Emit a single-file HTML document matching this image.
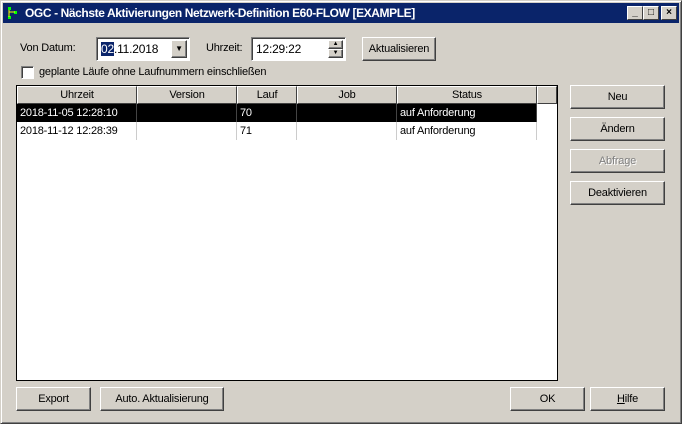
<!DOCTYPE html>
<html><head><meta charset="utf-8"><style>
*{box-sizing:border-box;margin:0;padding:0}
body{width:682px;height:424px;background:#D4D0C8;font-family:"Liberation Sans",sans-serif;font-size:11px;color:#000;position:relative;overflow:hidden;letter-spacing:-0.2px}
.win{position:absolute;left:0;top:0;width:682px;height:424px;border:1px solid;border-color:#D4D0C8 #404040 #404040 #D4D0C8;box-shadow:inset 1px 1px #fff,inset -1px -1px #808080}
.title{position:absolute;left:3px;top:3px;width:676px;height:20px;background:#0A246A;color:#fff;font-weight:bold;font-size:12px;line-height:20px;padding-left:22px;letter-spacing:-0.4px}
.a{position:absolute}
.btn{position:absolute;background:#D4D0C8;border:1px solid;border-color:#fff #404040 #404040 #fff;box-shadow:inset -1px -1px #808080;text-align:center;font-size:11px}
.sunk{position:absolute;background:#fff;border:1px solid;border-color:#808080 #fff #fff #808080;box-shadow:inset 1px 1px #404040}
.tb{position:absolute;top:3px;width:16px;height:14px;background:#D4D0C8;border:1px solid;border-color:#fff #404040 #404040 #fff;color:#000;font-size:10px;line-height:12px;text-align:center;font-weight:bold;letter-spacing:0}
.hd{position:absolute;top:86px;height:18px;background:#D4D0C8;border:1px solid;border-color:#fff #404040 #404040 #fff;text-align:center;line-height:16px}
.cell{position:absolute;height:18px;line-height:18px;padding-left:3px;border-right:1px solid #ccc}
</style></head><body>
<div class="win"></div>
<div class="title">OGC - Nächste Aktivierungen Netzwerk-Definition E60-FLOW [EXAMPLE]
<svg class="a" style="left:4px;top:3px" width="12" height="14"><rect x="1" y="1" width="3" height="3" fill="#0f0"/><rect x="7" y="5" width="3" height="3" fill="#0f0"/><rect x="1" y="10" width="3" height="3" fill="#0f0"/><path d="M2 4v7M2 6h6" stroke="#ff0" fill="none"/></svg>
<div class="tb" style="left:624px">_</div><div class="tb" style="left:640px">□</div><div class="tb" style="left:658px">×</div>
</div>
<div class="a" style="left:20px;top:42px">Von Datum:</div>
<div class="sunk" style="left:96px;top:37px;width:94px;height:24px"><span class="a" style="left:4px;top:4px;font-size:12px"><span style="background:#0A246A;color:#fff">02</span>.11.2018</span>
<div class="btn" style="left:74px;top:2px;width:16px;height:18px;font-size:8px;line-height:16px">▼</div></div>
<div class="a" style="left:206px;top:42px">Uhrzeit:</div>
<div class="sunk" style="left:251px;top:37px;width:95px;height:24px"><span class="a" style="left:4px;top:4px;font-size:12px">12:29:22</span>
<div class="btn" style="left:76px;top:2px;width:15px;height:9px;font-size:6px;line-height:7px">▲</div>
<div class="btn" style="left:76px;top:11px;width:15px;height:9px;font-size:6px;line-height:7px">▼</div></div>
<div class="btn" style="left:362px;top:37px;width:74px;height:24px;line-height:22px">Aktualisieren</div>
<div class="sunk" style="left:21px;top:66px;width:13px;height:13px"></div>
<div class="a" style="left:39px;top:66px">geplante Läufe ohne Laufnummern einschließen</div>
<div class="a" style="left:16px;top:85px;width:542px;height:296px;background:#fff;border:1px solid #000"></div>
<div class="hd" style="left:17px;width:120px">Uhrzeit</div>
<div class="hd" style="left:137px;width:100px">Version</div>
<div class="hd" style="left:237px;width:60px">Lauf</div>
<div class="hd" style="left:297px;width:100px">Job</div>
<div class="hd" style="left:397px;width:140px">Status</div>
<div class="hd" style="left:537px;width:20px"></div>
<div class="a" style="left:17px;top:104px;width:520px;height:18px;background:#000"></div>
<div class="cell" style="left:17px;top:104px;width:120px;color:#fff;border-color:#444">2018-11-05 12:28:10</div>
<div class="cell" style="left:137px;top:104px;width:100px;border-color:#444"></div>
<div class="cell" style="left:237px;top:104px;width:60px;color:#fff;border-color:#444">70</div>
<div class="cell" style="left:297px;top:104px;width:100px;border-color:#444"></div>
<div class="cell" style="left:397px;top:104px;width:140px;color:#fff;border-color:#444">auf Anforderung</div>
<div class="cell" style="left:17px;top:122px;width:120px">2018-11-12 12:28:39</div>
<div class="cell" style="left:137px;top:122px;width:100px"></div>
<div class="cell" style="left:237px;top:122px;width:60px">71</div>
<div class="cell" style="left:297px;top:122px;width:100px"></div>
<div class="cell" style="left:397px;top:122px;width:140px">auf Anforderung</div>
<div class="btn" style="left:570px;top:85px;width:95px;height:24px;line-height:22px">Neu</div>
<div class="btn" style="left:570px;top:117px;width:95px;height:24px;line-height:22px">Ändern</div>
<div class="btn" style="left:570px;top:149px;width:95px;height:24px;line-height:22px;color:#808080;text-shadow:1px 1px #fff">Abfrage</div>
<div class="btn" style="left:570px;top:181px;width:95px;height:24px;line-height:22px">Deaktivieren</div>
<div class="btn" style="left:16px;top:387px;width:75px;height:24px;line-height:22px">Export</div>
<div class="btn" style="left:100px;top:387px;width:124px;height:24px;line-height:22px">Auto. Aktualisierung</div>
<div class="btn" style="left:510px;top:387px;width:75px;height:24px;line-height:22px">OK</div>
<div class="btn" style="left:590px;top:387px;width:75px;height:24px;line-height:22px"><u>H</u>ilfe</div>
</body></html>
